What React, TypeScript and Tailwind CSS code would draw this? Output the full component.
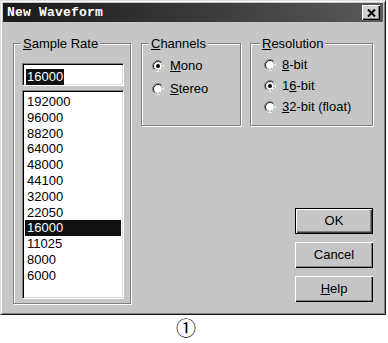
import type { ReactNode } from 'react'

const rates = [
  '192000',
  '96000',
  '88200',
  '64000',
  '48000',
  '44100',
  '32000',
  '22050',
  '16000',
  '11025',
  '8000',
  '6000',
]

function Radio({ checked }: { checked?: boolean }) {
  return (
    <svg width="12" height="12" viewBox="0 0 12 12" className="shrink-0">
      <circle cx="6" cy="6" r="5.5" fill="none" stroke="#808080" />
      <path d="M9.89 2.11 A5.5 5.5 0 0 1 2.11 9.89" fill="none" stroke="#ffffff" />
      <circle cx="6" cy="6" r="4.5" fill="#ffffff" stroke="#1e1e1e" />
      <path d="M9.18 2.82 A4.5 4.5 0 0 1 2.82 9.18" fill="none" stroke="#dcdcdc" />
      {checked && <circle cx="6" cy="6" r="2" fill="#000000" />}
    </svg>
  )
}

function Option({ checked, children }: { checked?: boolean; children: ReactNode }) {
  return (
    <div className="flex items-center gap-[6px] h-[20px]">
      <Radio checked={checked} />
      <span>{children}</span>
    </div>
  )
}

function Group({
  title,
  className,
  legendClass = 'ml-[7px]',
  children,
}: {
  title: ReactNode
  className: string
  legendClass?: string
  children: ReactNode
}) {
  return (
    <fieldset
      className={`border border-[#808080] shadow-[inset_1px_1px_0_#fff,1px_1px_0_#fff] ${className}`}
    >
      <legend className={`${legendClass} px-[2px] leading-[15px] bg-[#c6c6c6]`}>{title}</legend>
      {children}
    </fieldset>
  )
}

function Button({ children, isDefault }: { children: ReactNode; isDefault?: boolean }) {
  return (
    <div
      className={`w-[78px] h-[26px] flex items-center justify-center ${
        isDefault
          ? 'border border-black shadow-[inset_1px_1px_0_#fff,inset_-1px_-1px_0_#404040,inset_-2px_-2px_0_#808080]'
          : 'shadow-[inset_1px_1px_0_#fff,inset_-1px_-1px_0_#000,inset_-2px_-2px_0_#808080]'
      }`}
    >
      {children}
    </div>
  )
}

export default function App() {
  return (
    <div className="w-[388px] h-[343px] bg-white text-[13px] text-black font-['Liberation_Sans',Arial,sans-serif]">
      <div className="w-[386px] h-[315px] bg-[#c6c6c6] border border-t-[#dcdcdc] border-l-[#dcdcdc] border-r-[#1a1a1a] border-b-[#1a1a1a] p-[2px] flex flex-col shadow-[inset_1px_1px_0_#fff,inset_-1px_-1px_0_#808080]">
        <div className="h-[19px] flex items-center justify-between pl-[4px] pr-[3px] bg-linear-to-r from-[#1a1a1a] to-[#5a5a5a]">
          <span className="text-white font-bold text-[13px] font-['Liberation_Mono',monospace] tracking-[0.2px]">
            New Waveform
          </span>
          <div className="w-[18px] h-[15px] bg-[#d0d0d0] flex items-center justify-center shadow-[inset_1px_1px_0_#fff,inset_-1px_-1px_0_#000,inset_-2px_-2px_0_#808080]">
            <svg width="9" height="8" viewBox="0 0 9 8">
              <path d="M1 0.5 L8 7.5 M8 0.5 L1 7.5" stroke="#000" strokeWidth="2" />
            </svg>
          </div>
        </div>

        <div className="flex pt-[14px] pl-[10px] pr-[10px]">
          <Group
            title={
              <>
                <u>S</u>ample Rate
              </>
            }
            className="w-[120px] h-[268px]"
          >
            <div className="pl-[8px]">
              <div className="mt-[12px] w-[102px] h-[23px] bg-white border border-t-[#808080] border-l-[#808080] border-b-white border-r-white shadow-[inset_1px_1px_0_#000,inset_-1px_-1px_0_#dcdcdc] pl-[3px] pt-[3px]">
                <span className="bg-[#111] text-white leading-[16px] inline-block px-[1px]">16000</span>
              </div>
              <div className="mt-[4px] w-[102px] h-[209px] bg-white border border-t-[#808080] border-l-[#808080] border-b-white border-r-white shadow-[inset_1px_1px_0_#000,inset_-1px_-1px_0_#dcdcdc] pt-[3px] px-[2px]">
                {rates.map((r, i) => (
                  <div
                    key={r}
                    className={`h-[15.8px] leading-[15.8px] pl-[2px] ${
                      i === 8 ? 'bg-[#111] text-white' : ''
                    }`}
                  >
                    {r}
                  </div>
                ))}
              </div>
            </div>
          </Group>

          <div className="flex flex-col ml-[10px] flex-1">
            <div className="flex gap-[9px]">
              <Group
                title={
                  <>
                    <u>C</u>hannels
                  </>
                }
                className="w-[100px] h-[90px]"
              >
                <div className="flex flex-col gap-[3px] pl-[10px] pt-[5px]">
                  <Option checked>
                    <u>M</u>ono
                  </Option>
                  <Option>
                    <u>S</u>tereo
                  </Option>
                </div>
              </Group>
              <Group
                title={
                  <>
                    <u>R</u>esolution
                  </>
                }
                legendClass="ml-[9px]"
                className="w-[123px] h-[90px]"
              >
                <div className="flex flex-col gap-[1px] pl-[13px] pt-[4px]">
                  <Option>
                    <u>8</u>-bit
                  </Option>
                  <Option checked>
                    1<u>6</u>-bit
                  </Option>
                  <Option>
                    <u>3</u>2-bit (float)
                  </Option>
                </div>
              </Group>
            </div>

            <div className="flex flex-col items-end gap-[8px] mt-[82px]">
              <Button isDefault>OK</Button>
              <Button>Cancel</Button>
              <Button>
                <span>
                  <u>H</u>elp
                </span>
              </Button>
            </div>
          </div>
        </div>
      </div>
      <div className="pl-[176px] text-[20px] leading-[26px] font-['Noto_Sans_CJK_SC','DejaVu_Sans',serif]">
        ①
      </div>
    </div>
  )
}
